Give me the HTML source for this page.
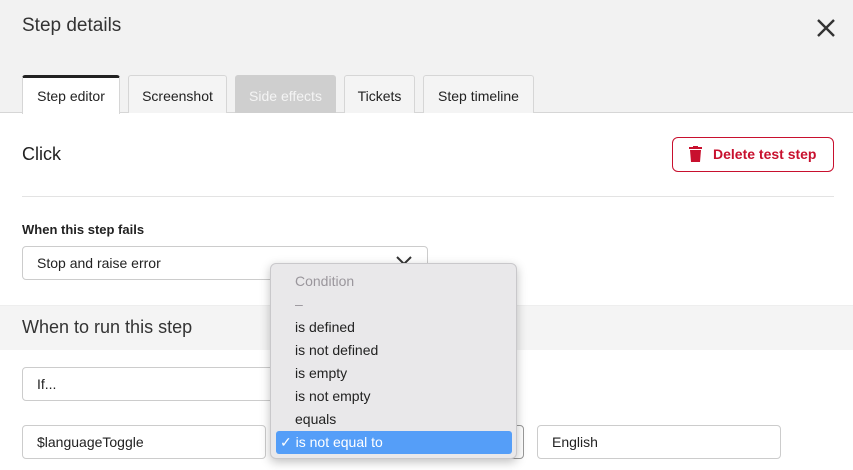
<!DOCTYPE html>
<html><head><meta charset="utf-8"><style>
*{box-sizing:border-box;margin:0;padding:0}
body{width:853px;height:470px;overflow:hidden;background:#fff;font-family:"Liberation Sans",sans-serif;color:#222;position:relative}
.abs{position:absolute}
.hdr{left:0;top:0;width:853px;height:113px;background:#f2f2f2;border-bottom:1px solid #d6d6d6}
.tab{position:absolute;top:75px;height:38px;border:1px solid #d6d6d6;border-bottom:none;border-radius:3px 3px 0 0;background:#f4f4f4;font-size:14px;line-height:40px;text-align:center;color:#222}
.inp{position:absolute;border:1px solid #ccc;border-radius:4px;height:34px;font-size:14px;line-height:32px;padding-left:14px;background:#fff;color:#222}
.dd{left:270px;top:263px;width:247px;height:196px;background:#e9e8ea;border:1px solid #c9c8cb;border-radius:6px;box-shadow:0 3px 10px rgba(0,0,0,.25);font-size:14px}
.dd div{position:absolute;left:24px;height:23px;line-height:23px}
</style></head><body>
<div class="abs hdr"></div>
<div class="abs" style="left:22px;top:15px;font-size:19px;color:#333">Step details</div>
<svg class="abs" style="left:816px;top:18px" width="20" height="20" viewBox="0 0 20 20"><path d="M2 2L18 18M18 2L2 18" stroke="#333" stroke-width="2.4"/></svg>
<div class="tab" style="left:22px;width:98px;background:#fff;border-top:3px solid #222;line-height:36px;height:39px">Step editor</div>
<div class="tab" style="left:128px;width:99px">Screenshot</div>
<div class="tab" style="left:235px;width:101px;background:#cfcfcf;color:#f4f4f4;border-color:#cfcfcf">Side effects</div>
<div class="tab" style="left:344px;width:71px">Tickets</div>
<div class="tab" style="left:423px;width:111px">Step timeline</div>
<div class="abs" style="left:22px;top:144px;font-size:18px">Click</div>
<div class="abs" style="left:672px;top:137px;width:162px;height:35px;border:1px solid #c8102e;border-radius:6px;color:#c8102e;font-size:14px;line-height:33px;padding-left:40px;font-weight:bold">Delete test step</div>
<svg class="abs" style="left:689px;top:146px" width="13" height="16" viewBox="0 0 13 16"><rect x="0" y="1" width="13" height="2" fill="#c8102e"/><rect x="4" y="0" width="5" height="2" fill="#c8102e"/><path d="M1 4H12L11 16H2Z" fill="#c8102e"/></svg>
<div class="abs" style="left:22px;top:196px;width:812px;height:1px;background:#e3e3e3"></div>
<div class="abs" style="left:22px;top:222px;font-size:13px;font-weight:bold">When this step fails</div>
<div class="inp" style="left:22px;top:246px;width:406px">Stop and raise error</div>
<svg class="abs" style="left:396px;top:256px" width="16" height="10" viewBox="0 0 16 10"><path d="M1 1L8 8L15 1" stroke="#333" stroke-width="2" fill="none"/></svg>
<div class="abs" style="left:0;top:305px;width:853px;height:45px;background:#f4f4f4;border-top:1px solid #eee"></div>
<div class="abs" style="left:22px;top:317px;font-size:18px;color:#333">When to run this step</div>
<div class="inp" style="left:22px;top:367px;width:260px">If...</div>
<div class="inp" style="left:22px;top:425px;width:244px">$languageToggle</div>
<div class="inp" style="left:282px;top:425px;width:242px;border-color:#999"></div>
<div class="inp" style="left:537px;top:425px;width:244px">English</div>
<div class="abs dd">
<div style="top:6px;color:#9a969c">Condition</div>
<div style="top:29px;color:#9a969c">–</div>
<div style="top:52px">is defined</div>
<div style="top:75px">is not defined</div>
<div style="top:98px">is empty</div>
<div style="top:121px">is not empty</div>
<div style="top:144px">equals</div>
<div style="left:5px;top:167px;width:236px;background:#559ef8;border-radius:3px;color:#fff;padding-left:4px">✓ is not equal to</div>
</div>
</body></html>
